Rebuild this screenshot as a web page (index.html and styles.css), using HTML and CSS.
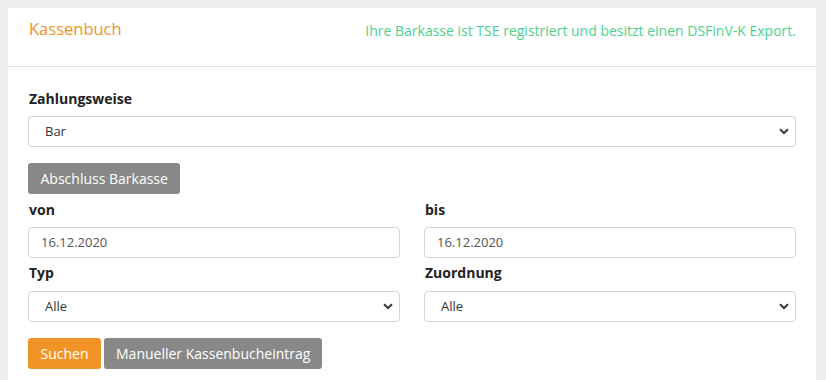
FILE: index.html
```html
<!DOCTYPE html>
<html lang="de">
<head>
<meta charset="utf-8">
<title>Kassenbuch</title>
<link rel="stylesheet" href="styles.css">
</head>
<body>
<div class="card">
  <div class="card-header">
    <h2 class="title">Kassenbuch</h2>
    <span class="status">Ihre Barkasse ist TSE registriert und besitzt einen DSFinV-K Export.</span>
  </div>
  <div class="card-body">
    <label class="label">Zahlungsweise</label>
    <div class="select mb16">Bar</div>
    <button class="btn btn-grey">Abschluss Barkasse</button>
    <div class="row">
      <div class="col">
        <label class="label tight">von</label>
        <div class="input">16.12.2020</div>
        <label class="label tight2">Typ</label>
        <div class="select">Alle</div>
      </div>
      <div class="col">
        <label class="label tight">bis</label>
        <div class="input">16.12.2020</div>
        <label class="label tight2">Zuordnung</label>
        <div class="select">Alle</div>
      </div>
    </div>
    <div class="actions">
      <button class="btn btn-orange">Suchen</button>
      <button class="btn btn-grey">Manueller Kassenbucheintrag</button>
    </div>
  </div>
</div>
</body>
</html>
```

FILE: styles.css
```css
html, body {
  margin: 0;
  padding: 0;
  background: #efefef;
  font-family: "Open Sans", "Liberation Sans", sans-serif;
}
body {
  padding: 8px 10px 0 8px;
  height: 380px;
  box-sizing: border-box;
  overflow: hidden;
}
.card {
  background: #fff;
  width: 808px;
  height: 372px;
}
.card-header {
  display: flex;
  justify-content: space-between;
  align-items: flex-start;
  padding: 9px 20px 0 21px;
  height: 49px;
  border-bottom: 1px solid #e0e0e0;
}
.title {
  margin: 0;
  font-size: 16.5px;
  line-height: 24px;
  font-weight: 400;
  color: #f39325;
}
.status {
  font-size: 14px;
  line-height: 24px;
  margin-top: 2px;
  color: #4cd28e;
}
.card-body {
  padding: 21px 20px 0 20px;
}
.label {
  display: block;
  font-size: 14px;
  line-height: 21px;
  font-weight: 700;
  color: #222;
  margin-bottom: 7px;
  padding-left: 1px;
}
.label.tight { margin-top: 5px; }
.label.tight2 { margin-top: 4px; margin-bottom: 8px; }
.select, .input {
  box-sizing: border-box;
  height: 31px;
  border: 1px solid #ced4da;
  border-radius: 4px;
  font-size: 13px;
  line-height: 29px;
  color: #333;
}
.select {
  padding-left: 16px;
  background-image: url("data:image/svg+xml;utf8,<svg xmlns='http://www.w3.org/2000/svg' width='10' height='7' viewBox='0 0 10 7'><path d='M1 1.2 L5 5 L9 1.2' fill='none' stroke='%23343a40' stroke-width='2'/></svg>");
  background-repeat: no-repeat;
  background-position: right 6px center;
}
.input {
  padding-left: 12px;
  color: #555;
}
.mb16 { margin-bottom: 16px; }
.btn {
  font-family: inherit;
  font-size: 14px;
  line-height: 21px;
  height: 31px;
  padding: 0 12px 0 12.5px;
  border: 0;
  border-radius: 3px;
  color: #fff;
  cursor: pointer;
}
.btn-grey { background: #888888; }
.btn-orange { background: #f29425; }
.row {
  display: flex;
  gap: 24px;
}
.col {
  flex: 1;
}
.actions {
  display: flex;
  gap: 3px;
  margin-top: 16px;
}
```
